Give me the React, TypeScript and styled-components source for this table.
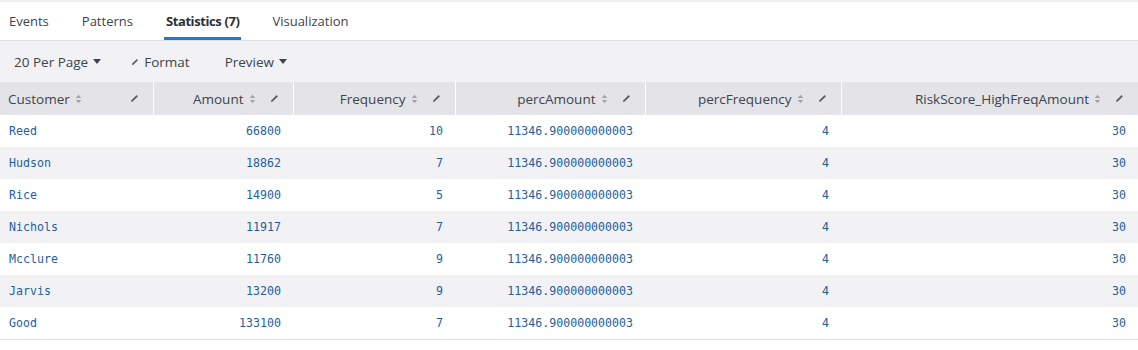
import React from "react";
import styled, { createGlobalStyle } from "styled-components";

const GlobalStyle = createGlobalStyle`
  body {
    margin: 0;
    background: #fff;
    font-family: "Open Sans", Lato, sans-serif;
  }
`;

const Page = styled.div`
  width: 1138px;
  border-top: 2px solid #efeff1;
`;

const TabBar = styled.div`
  display: flex;
  gap: 29px;
  height: 38px;
  padding-left: 7px;
  border-bottom: 1px solid #e1e1e4;
`;

const Tab = styled.div<{ $active?: boolean }>`
  display: flex;
  align-items: center;
  padding: 2px 2px 0;
  font-size: 13px;
  color: ${(p) => (p.$active ? "#2b3036" : "#3c444d")};
  font-weight: ${(p) => (p.$active ? 700 : 400)};
  letter-spacing: ${(p) => (p.$active ? "-0.4px" : "0")};
  border-bottom: 3px solid ${(p) => (p.$active ? "#1a7bd6" : "transparent")};
`;

const Toolbar = styled.div`
  display: flex;
  align-items: center;
  gap: 30px;
  height: 41px;
  padding-left: 14px;
  background: #f2f2f4;
`;

const ToolButton = styled.div<{ $shift?: number }>`
  display: flex;
  align-items: center;
  gap: 5px;
  margin-left: ${(p) => p.$shift ?? 0}px;
  font-size: 13.5px;
  color: #3c444d;
`;

const Table = styled.table`
  width: 1138px;
  border-collapse: collapse;
  table-layout: fixed;
  border-bottom: 1px solid #e1e1e4;
`;

const HeadCell = styled.th`
  height: 33px;
  padding: 0 14px 0 8px;
  background: #e4e4e8;
  border-left: 1px solid #fff;
  font-weight: 400;
  font-size: 13.5px;
  color: #3c444d;
  &:first-child {
    border-left: none;
  }
`;

const HeadInner = styled.div<{ $left?: boolean }>`
  display: flex;
  align-items: center;
  justify-content: ${(p) => (p.$left ? "space-between" : "flex-end")};
  gap: 14px;
`;

const Label = styled.span`
  display: flex;
  align-items: center;
  gap: 5px;
  white-space: nowrap;
`;

const Row = styled.tr<{ $striped: boolean }>`
  background: ${(p) => (p.$striped ? "#f2f2f5" : "#fff")};
`;

const Cell = styled.td<{ $left?: boolean }>`
  height: 32px;
  padding: 0 12px 0 9px;
  text-align: ${(p) => (p.$left ? "left" : "right")};
  font-family: "DejaVu Sans Mono", monospace;
  font-size: 11.6px;
  color: #1e5f9c;
`;

const SortIcon = () => (
  <svg width="7" height="10" viewBox="0 0 7 10">
    <path d="M3.5 0.8 L6.3 4 H0.7 Z M3.5 9.2 L0.7 6 H6.3 Z" fill="#a3a5ab" />
  </svg>
);

const Pencil = ({ size = 9 }: { size?: number }) => (
  <svg width={size} height={size} viewBox="0 0 9 9">
    <path d="M1 8 L1.4 6.3 L6.6 1.1 L7.9 2.4 L2.7 7.6 Z" fill="#5c5f66" />
  </svg>
);

const Caret = () => (
  <svg width="8" height="5" viewBox="0 0 8 5">
    <path d="M0 0 H8 L4 5 Z" fill="#3c444d" />
  </svg>
);

const columns = [
  { name: "Customer", width: 153 },
  { name: "Amount", width: 140 },
  { name: "Frequency", width: 162 },
  { name: "percAmount", width: 190 },
  { name: "percFrequency", width: 196 },
  { name: "RiskScore_HighFreqAmount", width: 297 },
];

const rows: [string, string, string][] = [
  ["Reed", "66800", "10"],
  ["Hudson", "18862", "7"],
  ["Rice", "14900", "5"],
  ["Nichols", "11917", "7"],
  ["Mcclure", "11760", "9"],
  ["Jarvis", "13200", "9"],
  ["Good", "133100", "7"],
];

export default function App() {
  return (
    <Page>
      <GlobalStyle />
      <TabBar>
        <Tab>Events</Tab>
        <Tab>Patterns</Tab>
        <Tab $active>Statistics (7)</Tab>
        <Tab>Visualization</Tab>
      </TabBar>
      <Toolbar>
        <ToolButton>
          20 Per Page <Caret />
        </ToolButton>
        <ToolButton>
          <Pencil size={8} /> Format
        </ToolButton>
        <ToolButton $shift={5}>
          Preview <Caret />
        </ToolButton>
      </Toolbar>
      <Table>
        <colgroup>
          {columns.map((c) => (
            <col key={c.name} style={{ width: c.width }} />
          ))}
        </colgroup>
        <thead>
          <tr>
            {columns.map((c, i) => (
              <HeadCell key={c.name}>
                <HeadInner $left={i === 0}>
                  <Label>
                    {c.name} <SortIcon />
                  </Label>
                  <Pencil />
                </HeadInner>
              </HeadCell>
            ))}
          </tr>
        </thead>
        <tbody>
          {rows.map(([name, amount, freq], i) => (
            <Row key={name} $striped={i % 2 === 1}>
              <Cell $left>{name}</Cell>
              <Cell>{amount}</Cell>
              <Cell>{freq}</Cell>
              <Cell>11346.900000000003</Cell>
              <Cell>4</Cell>
              <Cell>30</Cell>
            </Row>
          ))}
        </tbody>
      </Table>
    </Page>
  );
}
